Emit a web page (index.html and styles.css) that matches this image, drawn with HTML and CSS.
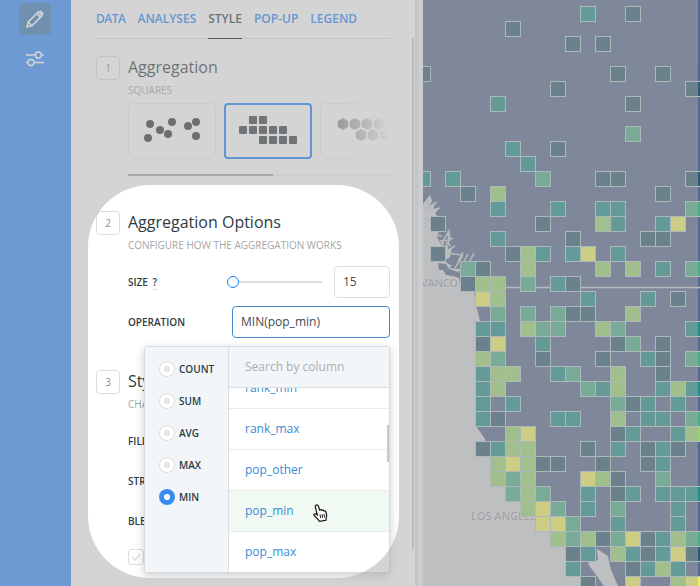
FILE: index.html
```html
<!DOCTYPE html>
<html lang="en">
<head>
<meta charset="utf-8">
<title>Map builder</title>
<link rel="stylesheet" href="styles.css">
</head>
<body>
<div class="app">
  <nav class="rail">
    <a class="rail-item active"><svg width="20" height="20" viewBox="0 0 20 20" fill="none" stroke="#fff" stroke-width="1.5"><path d="M2 18l1.2-5L13.500 2.700l3.700 3.700L7 16.800zM11.800 4.400l3.700 3.700M3.200 13l3.800 3.800"/><path d="M14.300 2.400l1.300-1.200 3.400 3.400-1.200 1.200z" fill="#fff" stroke="none"/></svg></a>
    <a class="rail-item"><svg width="20" height="18" viewBox="0 0 20 18" fill="none" stroke="#fff" stroke-width="1.400"><path d="M1 5h9M16 5h3M1 12.500h2M9 12.500h10"/><circle cx="13.300" cy="5" r="3"/><circle cx="6" cy="12.500" r="3"/></svg></a>
  </nav>

  <main class="panel">
    <header class="tabs">
      <a class="tab t-data">DATA</a><a class="tab">ANALYSES</a><a class="tab current">STYLE</a><a class="tab">POP-UP</a><a class="tab">LEGEND</a>
    </header>

    <section class="block first">
      <span class="num">1</span>
      <div class="content">
        <h2>Aggregation</h2>
        <p class="sub">SQUARES</p>
        <div class="cards">
          <div class="card"><svg width="86" height="54" viewBox="129 104 86 54" fill="#2f3336"><circle cx="150" cy="124" r="4"/><circle cx="148" cy="138" r="4"/><circle cx="160" cy="130" r="4"/><circle cx="168" cy="134" r="4"/><circle cx="172" cy="122" r="4"/><circle cx="188" cy="126" r="4"/><circle cx="196" cy="122" r="4"/><circle cx="196" cy="136" r="4"/></svg></div>
          <div class="card selected"><svg width="84" height="52" viewBox="226 105 84 52" fill="#363e42"><rect x="249" y="116" width="8" height="8" rx="1"/><rect x="259" y="116" width="8" height="8" rx="1"/><rect x="239" y="126" width="8" height="8" rx="1"/><rect x="249" y="126" width="8" height="8" rx="1"/><rect x="259" y="126" width="8" height="8" rx="1"/><rect x="269" y="126" width="8" height="8" rx="1"/><rect x="279" y="126" width="8" height="8" rx="1"/><rect x="259" y="136" width="8" height="8" rx="1"/><rect x="269" y="136" width="8" height="8" rx="1"/><rect x="279" y="136" width="8" height="8" rx="1"/><rect x="289" y="136" width="8" height="8" rx="1"/></svg></div>
          <div class="card"><svg width="86" height="54" viewBox="321 104 86 54" fill="#8c8c8c"><defs><path id="hex" d="M0-6L5.200-3V3L0 6L-5.200 3V-3z"/></defs><use href="#hex" x="343" y="124"/><use href="#hex" x="355" y="124"/><use href="#hex" x="367" y="124"/><use href="#hex" x="379" y="124"/><use href="#hex" x="361" y="135"/><use href="#hex" x="373" y="135"/><use href="#hex" x="385" y="135"/></svg></div>
        </div>
        <div class="hscroll"><div class="hthumb"></div></div>
      </div>
    </section>

    <section class="block second">
      <span class="num">2</span>
      <div class="content">
        <h2>Aggregation Options</h2>
        <p class="sub">CONFIGURE HOW THE AGGREGATION WORKS</p>
        <div class="row size">
          <label>SIZE <span class="help">?</span></label>
          <div class="slider"><i class="knob"></i><i class="track"></i></div>
          <div class="input small">15</div>
        </div>
        <div class="row operation">
          <label>OPERATION</label>
          <div class="input wide">MIN(pop_min)</div>
        </div>
      </div>
    </section>

    <section class="block third">
      <span class="num">3</span>
      <div class="content">
        <h2>Style</h2>
        <p class="sub">CHANGE</p>
        <div class="row fill"><label>FILL</label></div>
        <div class="row"><label>STROKE</label></div>
        <div class="row"><label>BLENDING</label></div>
        <div class="check"><svg width="14" height="14" viewBox="0 0 14 14" fill="none" stroke="#ddd" stroke-width="1.500"><path d="M3 7l3 3 5-6"/></svg></div>
      </div>
    </section>
    <div class="vthumb"></div>

    <div class="dropdown">
      <div class="ops">
        <span class="op"><i></i>COUNT</span>
        <span class="op"><i></i>SUM</span>
        <span class="op"><i></i>AVG</span>
        <span class="op"><i></i>MAX</span>
        <span class="op on"><i></i>MIN</span>
      </div>
      <div class="columns">
        <div class="search">Search by column</div>
        <div class="list">
          <div class="item cut">rank_min</div>
          <div class="item">rank_max</div>
          <div class="item">pop_other</div>
          <div class="item hover">pop_min</div>
          <div class="item">pop_max</div>
          <div class="list-thumb"></div>
        </div>
      </div>
    </div>
  </main>
  <div class="gutter"></div>

  <svg class="map" width="277" height="586" viewBox="423 0 277 586">
    <rect x="423" width="277" height="586" fill="#55678b"/>
    <g fill="none" stroke="#4d5e81" stroke-width="1.200" opacity=".7">
      <path d="M490 0v15l16 7M473 140l7 15 11 17M480 156l20-2M528 41l15-3 17 4M510 60l4-7M600 36l24-13M634 92l32-6 32-7M560 108l-18 5M655 140l9 18 2 10"/>
    </g>
    <path class="sea" d="M423 204l7-9 2 6-3 5 6-2-2 5 8-2-6 6 5 8-4 1 4 6-3 9 7 13 3-9 1 9 4-3-2 10-6 4 8 5-4 2 12 1 9 4L458 271L461 290L474 291L476 305L480 321L476 322V426L485 439V441L476 442V456H490V486H505V501H520V516H535V531H550V546H565V576H580V586H423z"/>
    <path class="land" d="M438 263l8 1 3 5 9 3 4 7-9-3-7-1-3-5h-4z"/>
    <path class="sea" d="M597 549l11 7 3 14 7 16h-14l-16-22 2-3 8-1z"/>
    <g class="inlets">
      <path d="M424 210l13-8M424 217l7 6 8 1M432 235l10 1M441 244l8-13 1 10M440 241l9-1 4-2M438 254l6-12M447 251l8-5M446 253l17 2M458 262l5-10M463 263l5-9M469 263l5-10M455 268l8-13M449 246l-1-15M428 199l-1 12M446 242l5 4"/>
      <path d="M505 287.500h195"/>
    </g>
    <g class="places">
      <text x="421" y="287" textLength="37">VANCO</text>
      <text x="471" y="520" textLength="71">LOS ANGELES</text>
    </g>
    <g class="faint"><text x="506" y="316" textLength="50">SEATTLE</text><text x="651" y="439">DENVER</text><text x="568" y="468">SCO</text><text x="674" y="77">CAN</text></g>
    <g id="cells"></g>
  </svg>

  <div class="dimmer"><div class="spotlight"></div></div>
  <svg class="cursor" width="16" height="18" viewBox="0 0 16 18"><path d="M4 1.200c.8-.7 2-.2 2.300.7L7.600 6c.8-.7 1.900-.5 2.300.3.800-.5 1.800-.2 2.100.6.900-.3 1.900.3 2 1.200l.7 3.500-.5 2.400-.3 2.300-6.500 1-1.400-2-3.600-3.500c-1.200-1.200.2-2.400 1.400-1.900l1.500 1L3.400 3.200c-.2-.8 0-1.600.6-2z" fill="#fff" stroke="#111" stroke-width="1.200"/><path d="M8 10.500l.6 3.500M10 10.300l.6 3.500M12 10l.6 3.500" stroke="#111"/></svg>
</div>
<script src="map.js"></script>
</body>
</html>
```

FILE: styles.css
```css
* { box-sizing: border-box; }
body { margin: 0; font-family: "Open Sans", sans-serif; color: #2e3c43; overflow: hidden; }
.app { position: relative; display: flex; width: 700px; height: 586px; overflow: hidden; background: #fff; }
.rail { width: 71px; flex: none; background: #318bfb; padding: 3px 0 0 19px; }
.rail-item { display: flex; width: 32px; height: 32px; align-items: center; justify-content: center; border-radius: 4px; margin-bottom: 8px; }
.rail-item.active { background: #3577b9; }

.panel { position: relative; width: 344px; flex: none; padding: 0 25px; height: 586px; overflow: hidden; }
.tabs { display: flex; height: 39px; border-bottom: 1px solid #ddd; font-size: 12px; line-height: 37px; font-weight: 600; }
.tab { color: #1785fb; height: 39px; margin-right: 12px; white-space: nowrap; }
.t-data { letter-spacing: -.5px; }
.tab.current { color: #2e3c43; border-bottom: 1px solid #111; }
.block { display: grid; grid-template-columns: 24px 262px; column-gap: 8px; }
.first { margin-top: 17px; height: 155px; }
.second { height: 159px; }
.num { display: flex; width: 24px; height: 24px; align-items: center; justify-content: center; border: 1px solid #ddd; border-radius: 4px; font-size: 10px; color: #8b8f92; }
.content { min-width: 0; }
h2 { margin: 0; font-size: 16px; line-height: 22px; font-weight: 400; }
.sub { margin: 4px 0 0; font-size: 10px; line-height: 16px; color: #a4a6a8; white-space: nowrap; }
.cards { display: flex; gap: 8px; margin-top: 5px; width: 262px; overflow: hidden; -webkit-mask-image: linear-gradient(90deg, #000 210px, transparent 262px); mask-image: linear-gradient(90deg, #000 210px, transparent 262px); }
.card { width: 88px; height: 56px; flex: none; border: 1px solid #eee; border-radius: 4px; }
.card svg { display: block; }
.card.selected { border: 2px solid #1785fb; }
.hscroll { margin-top: 15px; height: 2px; background: #eee; }
.hthumb { width: 145px; height: 2px; background: #aaa; }

.row { display: flex; align-items: center; height: 40px; }
.row.size { margin-top: 9px; }
.row.fill { margin-top: 9px; }
label { font-size: 10px; font-weight: 600; width: 96px; white-space: nowrap; }
.help { margin-left: 2px; border-bottom: 1px dotted #ccc; }
.slider { display: flex; align-items: center; width: 98px; margin-right: 12px; }
.knob { width: 12px; height: 12px; border: 1px solid #1785fb; border-radius: 50%; flex: none; margin-left: 3px; }
.track { height: 2px; flex: 1; background: #ddd; }
.input { height: 32px; border: 1px solid #ddd; border-radius: 4px; font-size: 12px; line-height: 30px; padding-left: 8px; color: #444b51; }
.small { width: 56px; }
.wide { width: 158px; border-color: #4287c4; }
.operation label { width: 104px; }
.check { width: 16px; height: 16px; border: 1px solid #ddd; border-radius: 3px; margin-top: 8px; }
.check svg { display: block; }
.vthumb { position: absolute; right: 1px; top: 38px; width: 2px; height: 511px; background: #ccc; }

.dropdown { position: absolute; left: 73px; top: 346px; width: 246px; height: 227px; display: flex; border: 1px solid #d8dbde; border-radius: 3px; background: #fff; box-shadow: 0 3px 10px rgba(0,0,0,.2); overflow: visible; }
.ops { width: 84px; background: #f2f6f9; border-right: 1px solid #dcdfe1; padding: 6px 0 0 14px; }
.op { display: flex; align-items: center; height: 32px; gap: 4px; font-size: 10px; font-weight: 600; }
.op i { width: 16px; height: 16px; border-radius: 50%; flex: none; border: 1px solid #ddd; background: radial-gradient(circle, #e8e8e8 3px, #fff 3.600px); }
.op.on i { border: 0; background: radial-gradient(circle, #fff 2.800px, #398cf2 3.400px); }
.columns { width: 160px; }
.search { height: 41px; background: #f2f6f9; border-bottom: 1px solid #dcdfe1; padding-left: 16px; font-size: 12px; line-height: 39px; color: #aaafb3; }
.list { position: relative; height: 184px; overflow: hidden; }
.item { height: 41px; border-bottom: 1px solid #ebebeb; padding-left: 16px; font-size: 12px; line-height: 40px; color: #398bd4; }
.item.cut { margin-top: -20px; }
.item.hover { background: #f0f9f2; }
.list-thumb { position: absolute; right: 0; top: 37px; width: 2px; height: 37px; background: #c8c8c8; }

.gutter { width: 8px; flex: none; background: linear-gradient(90deg, #dde2e6 3px, #eceef0 3px); }
.map { display: block; flex: none; }
.sea { fill: #d3d5d9; }
.land { fill: #55678b; }
.inlets { fill: none; stroke: #c4c9d2; stroke-width: 1.500; }
.places { font: 600 11px "Open Sans", sans-serif; fill: #989ca4; stroke: #e0e1e4; stroke-width: 1.500; paint-order: stroke; }
.faint { font: 600 11px "Open Sans", sans-serif; letter-spacing: 1px; fill: #45557a; opacity: .3; }
.cell { stroke: #b0c9c8; stroke-width: 1; }
.d { fill: #2d5b71; } .t { fill: #1f8d87; } .g { fill: #4bad87; } .l { fill: #99d371; } .y { fill: #f1f161; }

.dimmer { position: absolute; inset: 0 2px 0 0; overflow: hidden; }
.spotlight { position: absolute; left: 88px; top: 185px; width: 311px; height: 393px; border-radius: 62px; box-shadow: 0 0 0 800px rgba(169,169,169,.5); }
.cursor { position: absolute; left: 312px; top: 504px; }
```

FILE: map.js
```js
// Density per 15px square, one string per row, one letter per column.
const rows = [
  "...........t..d....",
  "......d............",
  "..........d.d......",
  "...................",
  "d............d..d..",
  ".........d........d",
  ".....t........d....",
  "...................",
  "..............g....",
  "......t..d.........",
  ".......t...........",
  "t.t.....g...dd....d",
  "...d.l..........d..",
  ".....t...t..tt....g",
  ".d......d...lt..ty.",
  ".....t....d....dd..",
  ".d....dlt.ty.t.....",
  "...gd..l....l.l.t.g",
  "...dll.g.td........",
  "....yl.....t...t.d.",
  ".....g.g.gdd..l....",
  "....tt.lgg..lg....t",
  "....dy..t....dg.d..",
  "....lg..d...d..td.g",
  "....tll..tg..l..d..",
  "....tl.....gtl..tlt",
  "....t.t......gdt.t.",
  "....td...tt..l.tt.g",
  "......ly.....dt..tl",
  "....dtll...d.t.dtd.",
  ".....lyldd..d..dt..",
  ".....lgl...yld..g..",
  "......glg..t.dt.ttt",
  ".......lyg.t.g...t.",
  "........yyg..t...t.",
  ".........lgldgydtlg",
  "..........dt.ltdtyd",
  "..........t...dtlt.",
  "...........d..y..ly"
];
const group = document.getElementById("cells");
rows.forEach((row, r) => [...row].forEach((level, c) => {
  if (level === ".") return;
  const cell = document.createElementNS("http://www.w3.org/2000/svg", "rect");
  cell.setAttribute("class", "cell " + level);
  cell.setAttribute("x", 415.5 + c * 15);
  cell.setAttribute("y", 6.5 + r * 15);
  cell.setAttribute("width", 15);
  cell.setAttribute("height", 15);
  group.appendChild(cell);
}));
```
